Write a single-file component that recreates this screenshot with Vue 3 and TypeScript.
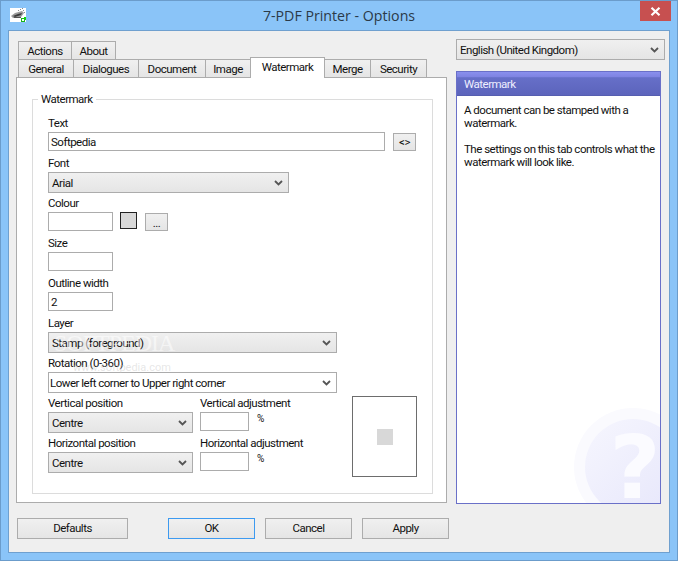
<script setup lang="ts">
interface Tab { label: string; width: number; active?: boolean }
const upperTabs: Tab[] = [
  { label: 'Actions', width: 54 },
  { label: 'About', width: 45 },
]
const lowerTabs: Tab[] = [
  { label: 'General', width: 56 },
  { label: 'Dialogues', width: 66 },
  { label: 'Document', width: 68 },
  { label: 'Image', width: 46 },
  { label: 'Watermark', width: 75, active: true },
  { label: 'Merge', width: 47 },
  { label: 'Security', width: 57 },
]
</script>

<template>
  <div class="window">
    <header class="titlebar">
      <svg class="app-icon" width="16" height="14" viewBox="0 0 16 14">
        <rect width="16" height="14" fill="#fff" />
        <path d="M1 8 L5 5 L12 3 L14 5 L11 9 L3 10 Z" fill="#9a9a9a" />
        <path d="M3 8 L8 6 L12 5 L11 7 L5 9 Z" fill="#3c3c3c" />
        <rect x="4" y="9" width="7" height="1" fill="#555" />
        <path d="M10 1h1v1h-1zM13 2h1v1h-1zM14 4h1v1h-1zM12 0h1v1h-1zM8 2h1v1H8z" fill="#8a8a8a" />
        <rect x="11" y="10" width="4" height="4" fill="#19b519" />
        <rect x="12" y="11" width="2" height="2" fill="#fff" />
        <rect x="14" y="9" width="2" height="3" fill="#0bd40b" />
      </svg>
      <h1 class="title">7-PDF Printer - Options</h1>
      <button class="close" type="button" aria-label="Close">
        <svg width="11" height="9" viewBox="0 0 11 9">
          <path d="M1.5 0.8 L9.5 8.2 M9.5 0.8 L1.5 8.2" stroke="#fff" stroke-width="2.2" fill="none" />
        </svg>
      </button>
    </header>

    <div class="client">
      <div class="main">
        <section class="left">
          <div class="tabs">
            <div class="tab-row upper">
              <div v-for="t in upperTabs" :key="t.label" class="tab" :style="{ width: t.width + 'px' }">{{ t.label }}</div>
            </div>
            <div class="tab-row lower">
              <div
                v-for="t in lowerTabs"
                :key="t.label"
                class="tab"
                :class="{ active: t.active }"
                :style="{ width: t.width + 'px' }"
              >{{ t.label }}</div>
            </div>
          </div>

          <div class="panel">
            <fieldset class="group">
              <legend>Watermark</legend>
              <div class="rows">
                <div class="field">
                  <label>Text</label>
                  <div class="inline">
                    <div class="input w-text">Softpedia</div>
                    <button class="btn small code" type="button">&lt;&gt;</button>
                  </div>
                </div>
                <div class="field">
                  <label>Font</label>
                  <div class="select w-font"><span>Arial</span><svg class="chev" width="9" height="6" viewBox="0 0 9 6"><path d="M1 1 L4.5 4.5 L8 1" fill="none" stroke="#555" stroke-width="1.8" /></svg></div>
                </div>
                <div class="field">
                  <label>Colour</label>
                  <div class="inline">
                    <div class="input w-short"></div>
                    <div class="swatch"></div>
                    <button class="btn small dots" type="button">...</button>
                  </div>
                </div>
                <div class="field">
                  <label>Size</label>
                  <div class="input w-short"></div>
                </div>
                <div class="field">
                  <label>Outline width</label>
                  <div class="input w-short">2</div>
                </div>
                <div class="field">
                  <label>Layer</label>
                  <div class="select w-wide"><span>Stamp (foreground)</span><svg class="chev" width="9" height="6" viewBox="0 0 9 6"><path d="M1 1 L4.5 4.5 L8 1" fill="none" stroke="#555" stroke-width="1.8" /></svg></div>
                </div>
                <div class="field">
                  <label>Rotation (0-360)</label>
                  <div class="select white w-wide"><span>Lower left corner to Upper right corner</span><svg class="chev" width="9" height="6" viewBox="0 0 9 6"><path d="M1 1 L4.5 4.5 L8 1" fill="none" stroke="#555" stroke-width="1.8" /></svg></div>
                </div>
                <div class="position">
                  <div class="field">
                    <label>Vertical position</label>
                    <div class="select w-pos"><span>Centre</span><svg class="chev" width="9" height="6" viewBox="0 0 9 6"><path d="M1 1 L4.5 4.5 L8 1" fill="none" stroke="#555" stroke-width="1.8" /></svg></div>
                  </div>
                  <div class="field">
                    <label>Vertical adjustment</label>
                    <div class="inline top"><div class="input w-adj"></div><span class="pct">%</span></div>
                  </div>
                  <div class="preview"><div class="stamp"></div></div>
                  <div class="field">
                    <label>Horizontal position</label>
                    <div class="select w-pos"><span>Centre</span><svg class="chev" width="9" height="6" viewBox="0 0 9 6"><path d="M1 1 L4.5 4.5 L8 1" fill="none" stroke="#555" stroke-width="1.8" /></svg></div>
                  </div>
                  <div class="field">
                    <label>Horizontal adjustment</label>
                    <div class="inline top"><div class="input w-adj"></div><span class="pct">%</span></div>
                  </div>
                </div>
              </div>
            </fieldset>
          </div>
        </section>

        <aside class="right">
          <div class="select lang"><span>English (United Kingdom)</span><svg class="chev" width="9" height="6" viewBox="0 0 9 6"><path d="M1 1 L4.5 4.5 L8 1" fill="none" stroke="#555" stroke-width="1.8" /></svg></div>
          <div class="help">
            <div class="help-head">Watermark</div>
            <div class="help-body">
              <p>A document can be stamped with a watermark.</p>
              <p>The settings on this tab controls what the watermark will look like.</p>
            </div>
            <svg class="help-mark" width="86" height="96" viewBox="0 0 86 96">
              <defs>
                <linearGradient id="mark" x1="0" x2="1" y1="0" y2="1">
                  <stop offset="0" stop-color="#f6f6fe" />
                  <stop offset="1" stop-color="#e6e6fb" />
                </linearGradient>
              </defs>
              <circle cx="59" cy="60" r="59" fill="#fafafe" />
              <circle cx="59" cy="60" r="48" fill="url(#mark)" />
              <text x="61" y="91" text-anchor="middle" class="q">?</text>
            </svg>
          </div>
        </aside>
      </div>

      <footer class="footer">
        <button class="btn action defaults" type="button">Defaults</button>
        <button class="btn action ok" type="button">OK</button>
        <button class="btn action" type="button">Cancel</button>
        <button class="btn action" type="button">Apply</button>
      </footer>
    </div>

    <div class="ghost">SOFTPEDIA</div>
    <div class="ghost-url">www.softpedia.com</div>
  </div>
</template>

<style>
html, body { margin: 0; padding: 0; background: #8ac4f8; }
</style>

<style scoped>
* { box-sizing: border-box; }
.window {
  position: relative;
  width: 678px;
  height: 561px;
  display: flex;
  flex-direction: column;
  padding: 0 7px 7px;
  background: #8ac4f8;
  border: 1px solid #6b9ccb;
  font: 11.5px/14px Roboto, "Liberation Sans", sans-serif;
  letter-spacing: -0.5px;
  color: #111;
  overflow: hidden;
}
.titlebar {
  height: 29px;
  flex: none;
  display: flex;
  align-items: flex-start;
  position: relative;
}
.app-icon { margin: 7px 0 0 2px; }
.title {
  position: absolute;
  left: 0;
  right: 0;
  top: 5px;
  margin: 0;
  text-align: center;
  font: 400 14.2px/20px "Open Sans", sans-serif;
  letter-spacing: 0;
  color: #2b3a48;
}
.close {
  position: absolute;
  right: -1px;
  top: 0;
  width: 31px;
  height: 20px;
  padding: 0;
  border: 0;
  background: #c75050;
  display: flex;
  align-items: center;
  justify-content: center;
}
.client {
  flex: 1;
  background: #efefef;
  border: 1px solid #6fa0cf;
  display: flex;
  flex-direction: column;
}
.main {
  display: flex;
  padding-left: 7px;
  height: 473px;
}
.left {
  width: 431px;
  padding-top: 10px;
  flex: none;
}
.tabs { height: 37px; padding-left: 2px; }
.tab-row { display: flex; height: 19px; }
.upper { height: 18px; }
.lower { align-items: flex-end; position: relative; }
.tab {
  height: 19px;
  margin-right: -1px;
  border: 1px solid #acacac;
  background: linear-gradient(#f0f0f0, #e5e5e5);
  text-align: center;
  line-height: 19px;
}
.tab.active {
  height: 21px;
  margin-top: -2px;
  background: #fff;
  border-bottom: 0;
  position: relative;
  z-index: 2;
  line-height: 18px;
}
.panel {
  height: 426px;
  border: 1px solid #acacac;
  background: #fff;
  margin-top: -1px;
  padding: 14px 13px 0 15px;
}
.group {
  margin: 0;
  height: 402px;
  min-width: 0;
  border: 1px solid #dcdcdc;
  padding: 10px 0 0 15px;
}
.group legend { padding: 0 3px; margin-left: -10px; line-height: 14px; }
.rows { display: grid; grid-auto-rows: 40px; }
.field label { display: block; height: 16px; line-height: 14px; }
.inline { display: flex; align-items: flex-start; }
.input {
  height: 19px;
  background: #fff;
  border: 1px solid #acacac;
  padding-left: 2px;
  line-height: 19px;
}
.w-text { width: 337px; }
.w-short { width: 65px; }
.w-adj { width: 49px; }
.select {
  height: 21px;
  display: flex;
  align-items: center;
  justify-content: space-between;
  border: 1px solid #acacac;
  background: linear-gradient(#f0f0f0, #e5e5e5);
  padding: 0 5px 0 3px;
}
.select.white { background: #fff; padding-left: 1px; }
.w-font { width: 241px; }
.w-wide { width: 289px; }
.w-pos { width: 145px; }
.btn {
  font: inherit;
  letter-spacing: inherit;
  color: inherit;
  padding: 0;
  border: 1px solid #acacac;
  background: linear-gradient(#f0f0f0, #e5e5e5);
}
.small { width: 23px; height: 18px; margin-top: 1px; }
.code { margin-left: 8px; }
.dots { margin-left: 8px; line-height: 18px; }
.swatch {
  width: 17px;
  height: 17px;
  margin-left: 7px;
  background: #d8d8d8;
  border: 1px solid #222;
}
.position {
  grid-row: span 2;
  display: grid;
  grid-template-columns: 152px 152px 65px;
  grid-template-rows: 40px 40px;
}
.preview {
  grid-column: 3;
  grid-row: 1 / span 2;
  width: 65px;
  height: 81px;
  border: 1px solid #6d6d6d;
  display: flex;
  align-items: center;
  justify-content: center;
}
.stamp { width: 16px; height: 16px; background: #d8d8d8; }
.pct { margin-left: 8px; font-size: 10px; line-height: 14px; }
.right { width: 205px; margin-left: 9px; padding-top: 8px; flex: none; }
.lang { width: 209px; }
.help {
  position: relative;
  height: 433px;
  margin-top: 11px;
  border: 1px solid #6a70c8;
  background: #fff;
  overflow: hidden;
}
.help-head {
  height: 24px;
  padding: 0 0 0 7px;
  color: #eef;
  line-height: 24px;
  background: linear-gradient(#8a90ee 0, #7f84e2 20%, #666fc8 25%, #5c64bc 100%);
  border-bottom: 1px solid #565eb0;
}
.help-body { padding: 8px 0 0 7px; }
.help-body p { margin: 0 0 13px; line-height: 13px; }
.help-mark { position: absolute; right: 0; bottom: 0; }
.q { font: 700 88px "DejaVu Sans", sans-serif; letter-spacing: 0; fill: #fbfbff; }
.footer {
  display: flex;
  padding: 14px 0 0 8px;
  gap: 10px;
}
.action { width: 87px; height: 21px; padding-bottom: 1px; }
.defaults { width: 111px; margin-right: 30px; }
.ok { border-color: #3d9af0; }
.ghost {
  position: absolute;
  left: 53px;
  top: 330px;
  font: 400 24px/24px "Liberation Serif", serif;
  letter-spacing: -1px;
  color: rgba(255, 255, 255, 0.55);
  pointer-events: none;
}
.ghost-url {
  position: absolute;
  left: 72px;
  top: 360px;
  font-size: 11px;
  letter-spacing: 0;
  color: rgba(200, 200, 200, 0.45);
  pointer-events: none;
}
</style>
